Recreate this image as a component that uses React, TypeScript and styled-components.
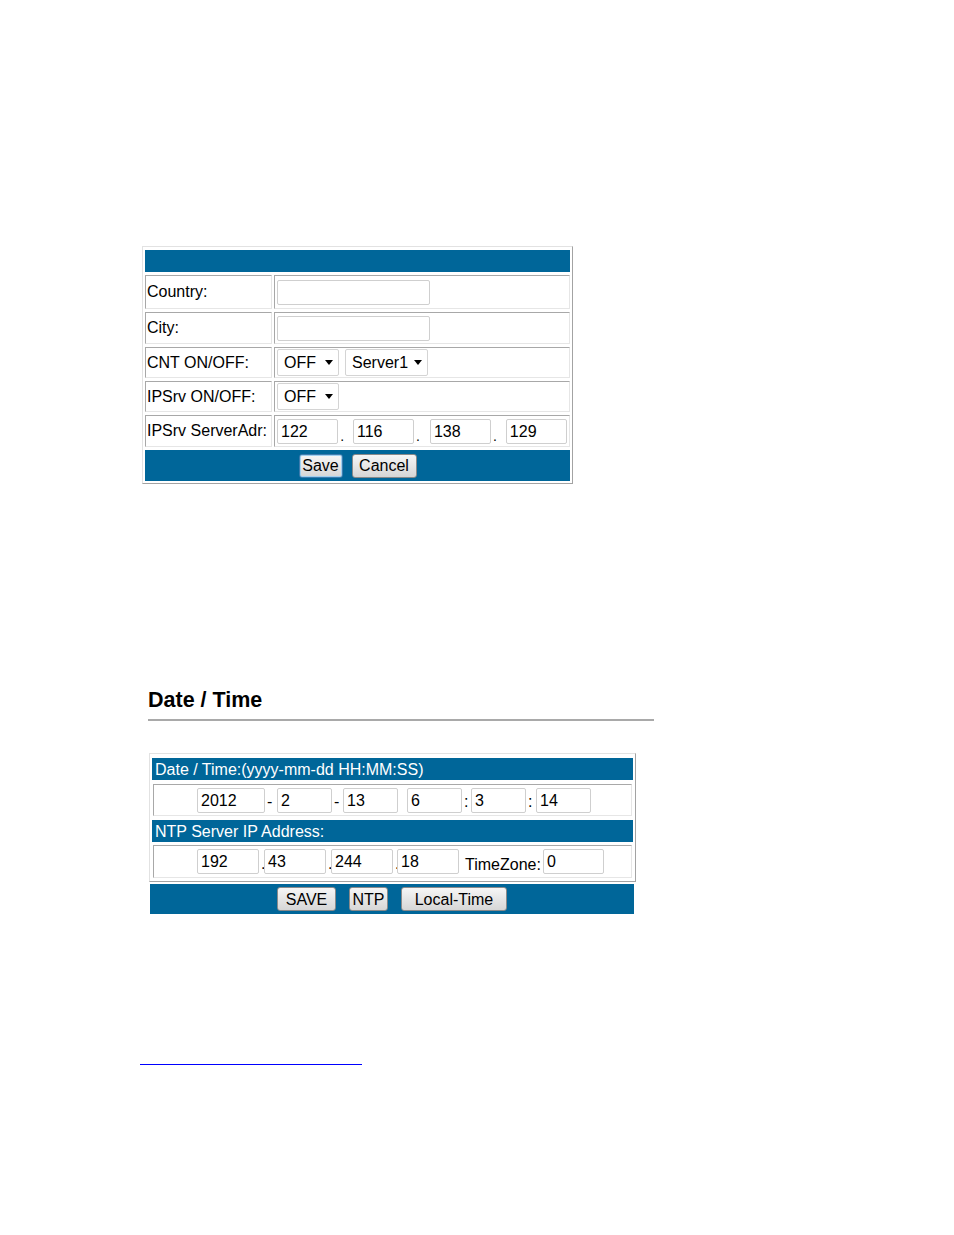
import { Fragment } from "react";
import styled, { createGlobalStyle } from "styled-components";

const GlobalStyle = createGlobalStyle`
  html, body {
    margin: 0;
    padding: 0;
    background: #fff;
  }
`;

const BLUE = "#006699";

const Page = styled.div`
  font-family: "Liberation Sans", Arial, sans-serif;
  font-size: 16px;
  color: #000;
  padding: 246px 0 120px;
`;

// ---- settings table ----
const Panel = styled.div`
  margin-left: 142px;
  width: 431px;
  box-sizing: border-box;
  border: 1px solid;
  border-color: #e2e2e2 #a3a3a3 #a3a3a3 #e2e2e2;
  padding: 3px 2px 2px;
  display: grid;
  grid-template-columns: 127px 296px;
  grid-template-rows: 22px 34px 32px 31px 31px 32px 31px;
  column-gap: 2px;
  row-gap: 3px;
`;

const HeaderBar = styled.div`
  grid-column: 1 / -1;
  background: ${BLUE};
`;

const Cell = styled.div`
  box-sizing: border-box;
  border: 1px solid;
  border-color: #a8a8a8 #e6e6e6 #e6e6e6 #a8a8a8;
  display: flex;
  align-items: center;
  white-space: nowrap;
`;

const LabelCell = styled(Cell)`
  padding: 0 1px;
`;

const ValueCell = styled(Cell)<{ $gap?: number }>`
  padding: 0 2px;
  gap: ${(p) => p.$gap ?? 0}px;
`;

const TextBox = styled.div<{ $w: number }>`
  box-sizing: border-box;
  width: ${(p) => p.$w}px;
  height: 25px;
  border: 1px solid #cfcfcf;
  border-radius: 2px;
  background: #fff;
  padding: 1px 3px 0;
  display: flex;
  align-items: center;
  line-height: 18px;
`;

const SelectBox = styled.div<{ $w: number }>`
  box-sizing: border-box;
  width: ${(p) => p.$w}px;
  height: 27px;
  border: 1px solid #d4d4d4;
  border-radius: 2px;
  background: #fff;
  padding: 0 5px 0 6px;
  display: flex;
  align-items: center;
  justify-content: space-between;
`;

const Arrow = styled.span`
  width: 0;
  height: 0;
  border-left: 4.5px solid transparent;
  border-right: 4.5px solid transparent;
  border-top: 5px solid #000;
`;

const Dot = styled.span<{ $w: number }>`
  width: ${(p) => p.$w}px;
  align-self: flex-end;
  line-height: 16px;
  margin-bottom: 2px;
  padding-left: 2px;
  box-sizing: border-box;
  font-size: 14px;
`;

const FooterRow = styled.div`
  grid-column: 1 / -1;
  background: ${BLUE};
  display: flex;
  align-items: center;
  justify-content: center;
  gap: 9px;
`;

const Button = styled.button<{ $w: number; $focus?: boolean }>`
  box-sizing: border-box;
  height: 24px;
  width: ${(p) => p.$w}px;
  padding: 1px 0 0;
  font-family: "Liberation Sans", Arial, sans-serif;
  font-size: 16px;
  color: #000;
  background: linear-gradient(#f6f6f6, #e6e6e6 50%, #d6d6d6);
  border: 1px solid ${(p) => (p.$focus ? "#3d7bad" : "#8a8a8a")};
  border-radius: 3px;
  box-shadow: ${(p) => (p.$focus ? "inset 0 0 0 1px #9fd0f0" : "none")};
  cursor: pointer;
  white-space: nowrap;
`;

// ---- date / time ----
const Heading = styled.h2`
  margin: 204px 0 0 148px;
  font-size: 21.5px;
  line-height: 24px;
  font-weight: bold;
`;

const Rule = styled.div`
  margin: 7px 0 0 148px;
  width: 506px;
  height: 2px;
  background: #a9a9a9;
`;

const DatePanel = styled.div`
  margin: 32px 0 0 149px;
  width: 487px;
  box-sizing: border-box;
  border: 1px solid;
  border-color: #e2e2e2 #a3a3a3 #a3a3a3 #e2e2e2;
  padding: 4px 2px 3px;
  display: flex;
  flex-direction: column;
`;

const SectionTitle = styled.div<{ $mt: number }>`
  margin-top: ${(p) => p.$mt}px;
  height: 22px;
  background: ${BLUE};
  color: #fff;
  padding-left: 3px;
  line-height: 24px;
  white-space: nowrap;
`;

const FieldRow = styled(Cell)<{ $h: number; $mt: number }>`
  margin: ${(p) => p.$mt}px 0 0 1px;
  width: 479px;
  height: ${(p) => p.$h}px;
  padding-left: 43px;
`;

const Sep = styled.span<{ $w: number }>`
  width: ${(p) => p.$w}px;
  box-sizing: border-box;
  padding-left: 2px;
  align-self: flex-end;
  line-height: 18px;
  margin-bottom: 4px;
`;

const ZoneLabel = styled.span`
  margin: 0 2px 3px 6px;
  align-self: flex-end;
  line-height: 18px;
`;

const ActionBar = styled.div`
  margin: 2px 0 0 150px;
  width: 484px;
  height: 30px;
  background: ${BLUE};
  display: flex;
  align-items: center;
  justify-content: center;
  gap: 13px;
`;

const LinkLine = styled.a`
  display: block;
  margin: 133px 0 0 140px;
  width: 222px;
  height: 17px;
  border-bottom: 1px solid #0000ff;
  text-decoration: none;
  color: #0000ff;
`;

export default function App() {
  const serverAdr = ["122", "116", "138", "129"];
  const dateParts: { v: string; w: number; sep?: string; sw: number }[] = [
    { v: "2012", w: 68, sep: "-", sw: 12 },
    { v: "2", w: 55, sep: "-", sw: 11 },
    { v: "13", w: 55, sep: "", sw: 9 },
    { v: "6", w: 55, sep: ":", sw: 9 },
    { v: "3", w: 55, sep: ":", sw: 10 },
    { v: "14", w: 55, sw: 0 },
  ];
  const ntp = ["192", "43", "244", "18"];

  return (
    <>
      <GlobalStyle />
      <Page>
        <Panel>
          <HeaderBar />
          <LabelCell>Country:</LabelCell>
          <ValueCell>
            <TextBox $w={153} />
          </ValueCell>
          <LabelCell>City:</LabelCell>
          <ValueCell>
            <TextBox $w={153} />
          </ValueCell>
          <LabelCell>CNT ON/OFF:</LabelCell>
          <ValueCell $gap={6}>
            <SelectBox $w={62}>
              OFF <Arrow />
            </SelectBox>
            <SelectBox $w={83}>
              Server1 <Arrow />
            </SelectBox>
          </ValueCell>
          <LabelCell>IPSrv ON/OFF:</LabelCell>
          <ValueCell>
            <SelectBox $w={62}>
              OFF <Arrow />
            </SelectBox>
          </ValueCell>
          <LabelCell>IPSrv ServerAdr:</LabelCell>
          <ValueCell>
            {serverAdr.map((v, i) => (
              <Fragment key={v}>
                <TextBox $w={62}>{v}</TextBox>
                {i < serverAdr.length - 1 && (
                  <Dot $w={i === 1 ? 16 : 15}>.</Dot>
                )}
              </Fragment>
            ))}
          </ValueCell>
          <FooterRow>
            <Button $w={44} $focus>
              Save
            </Button>
            <Button $w={65}>Cancel</Button>
          </FooterRow>
        </Panel>

        <Heading>Date / Time</Heading>
        <Rule />

        <DatePanel>
          <SectionTitle $mt={0}>Date / Time:(yyyy-mm-dd HH:MM:SS)</SectionTitle>
          <FieldRow $h={32} $mt={4}>
            {dateParts.map((d) => (
              <Fragment key={d.v}>
                <TextBox $w={d.w}>{d.v}</TextBox>
                {d.sw > 0 && <Sep $w={d.sw}>{d.sep}</Sep>}
              </Fragment>
            ))}
          </FieldRow>
          <SectionTitle $mt={4}>NTP Server IP Address:</SectionTitle>
          <FieldRow $h={33} $mt={3}>
            {ntp.map((v, i) => (
              <Fragment key={v}>
                <TextBox $w={62}>{v}</TextBox>
                {i < ntp.length - 1 && <Sep $w={i === 2 ? 4 : 5}>.</Sep>}
              </Fragment>
            ))}
            <ZoneLabel>TimeZone:</ZoneLabel>
            <TextBox $w={61}>0</TextBox>
          </FieldRow>
        </DatePanel>
        <ActionBar>
          <Button $w={59}>SAVE</Button>
          <Button $w={39}>NTP</Button>
          <Button $w={106}>Local-Time</Button>
        </ActionBar>

        <LinkLine href="#">{"\u00a0"}</LinkLine>
      </Page>
    </>
  );
}
